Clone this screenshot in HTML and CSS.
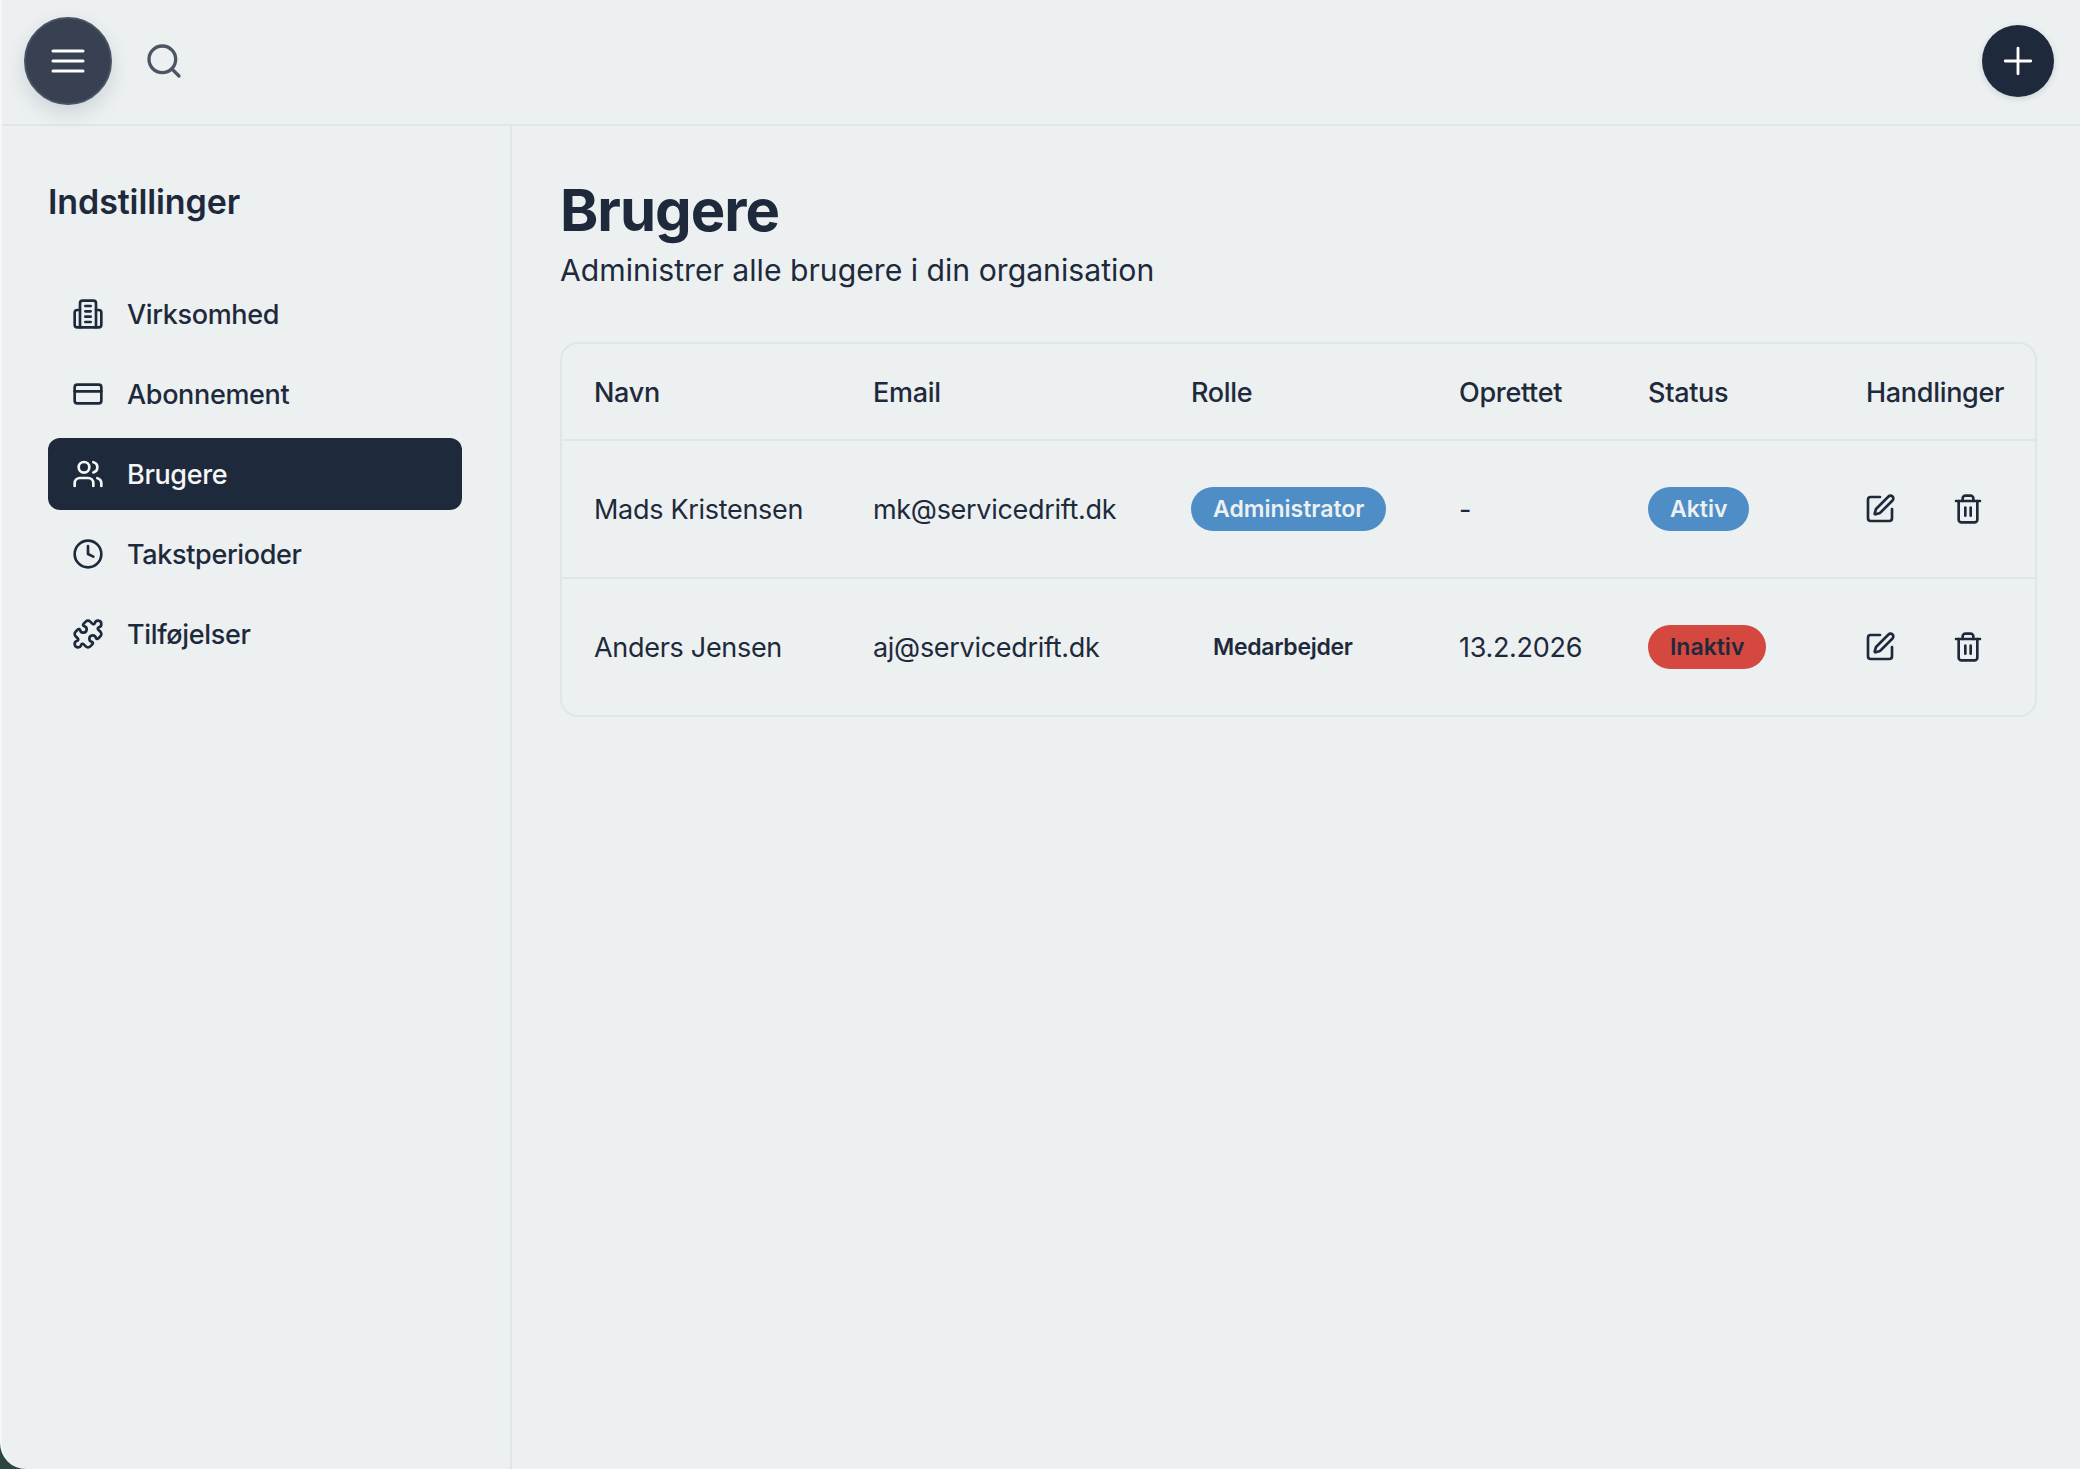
FILE: index.html
```html
<!DOCTYPE html>
<html lang="da">
<head>
<meta charset="utf-8">
<title>Brugere</title>
<link rel="stylesheet" href="styles.css">
</head>
<body>
<svg class="defs" aria-hidden="true">
  <symbol id="i-edit" viewBox="0 0 24 24"><path d="M12 3H5a2 2 0 0 0-2 2v14a2 2 0 0 0 2 2h14a2 2 0 0 0 2-2v-7"/><path d="M18.375 2.625a1 1 0 0 1 3 3l-9.013 9.014a2 2 0 0 1-.853.505l-2.873.84a.5.5 0 0 1-.62-.62l.84-2.873a2 2 0 0 1 .506-.852z"/></symbol>
  <symbol id="i-trash" viewBox="0 0 24 24"><path d="M3 6h18"/><path d="M19 6v14c0 1-1 2-2 2H7c-1 0-2-1-2-2V6"/><path d="M8 6V4c0-1 1-2 2-2h4c1 0 2 1 2 2v2"/><path d="M10 11v6"/><path d="M14 11v6"/></symbol>
</svg>
<div class="app">
  <header class="topbar">
    <div class="topbar-left">
      <button class="menu-btn" aria-label="Menu"><svg class="icon-menu" viewBox="0 0 24 24"><path d="M3 6h18M3 12h18M3 18h18"/></svg></button>
      <svg class="icon-search" viewBox="0 0 24 24"><circle cx="11" cy="11" r="8"/><path d="m21 21-4.3-4.3"/></svg>
    </div>
    <button class="add-btn" aria-label="Tilføj"><svg class="icon-plus" viewBox="0 0 24 24"><path d="M12 3v18M3 12h18"/></svg></button>
  </header>
  <div class="body">
    <aside class="sidebar">
      <h2 class="side-title">Indstillinger</h2>
      <nav class="nav">
        <a class="nav-item"><svg class="nav-icon" viewBox="0 0 24 24"><path d="M6 9H4a2 2 0 0 0-2 2v9a2 2 0 0 0 2 2h16a2 2 0 0 0 2-2v-9a2 2 0 0 0-2-2h-2"/><path d="M6 22V4a2 2 0 0 1 2-2h8a2 2 0 0 1 2 2v18"/><path d="M10 6h4M10 10h4M10 14h4M10 18h4"/></svg>Virksomhed</a>
        <a class="nav-item"><svg class="nav-icon" viewBox="0 0 24 24"><rect x="2" y="5" width="20" height="14" rx="2"/><path d="M2 10h20"/></svg>Abonnement</a>
        <a class="nav-item active"><svg class="nav-icon" viewBox="0 0 24 24"><path d="M16 21v-2a4 4 0 0 0-4-4H6a4 4 0 0 0-4 4v2"/><circle cx="9" cy="7" r="4"/><path d="M22 21v-2a4 4 0 0 0-3-3.87"/><path d="M16 3.13a4 4 0 0 1 0 7.75"/></svg>Brugere</a>
        <a class="nav-item"><svg class="nav-icon" viewBox="0 0 24 24"><circle cx="12" cy="12" r="10"/><path d="M12 6v6l4 2"/></svg>Takstperioder</a>
        <a class="nav-item"><svg class="nav-icon" viewBox="0 0 24 24"><path d="M15.39 4.39a1 1 0 0 0 1.68-.474 2.5 2.5 0 1 1 3.014 3.015 1 1 0 0 0-.474 1.68l1.683 1.682a2.414 2.414 0 0 1 0 3.414L19.61 15.39a1 1 0 0 1-1.68-.474 2.5 2.5 0 1 0-3.014 3.015 1 1 0 0 1 .474 1.68l-1.683 1.682a2.414 2.414 0 0 1-3.414 0L8.61 19.61a1 1 0 0 0-1.68.474 2.5 2.5 0 1 1-3.014-3.015 1 1 0 0 0 .474-1.68l-1.683-1.682a2.414 2.414 0 0 1 0-3.414L4.39 8.61a1 1 0 0 1 1.68.474 2.5 2.5 0 1 0 3.014-3.015 1 1 0 0 1-.474-1.68l1.683-1.682a2.414 2.414 0 0 1 3.414 0z"/></svg>Tilføjelser</a>
      </nav>
    </aside>
    <main class="content">
      <h1 class="page-title">Brugere</h1>
      <p class="page-sub">Administrer alle brugere i din organisation</p>
      <div class="table-wrap">
        <table class="users">
          <thead>
            <tr><th class="c-name">Navn</th><th class="c-mail">Email</th><th class="c-role">Rolle</th><th class="c-date">Oprettet</th><th class="c-status">Status</th><th class="c-act">Handlinger</th></tr>
          </thead>
          <tbody>
            <tr>
              <td>Mads Kristensen</td><td>mk@servicedrift.dk</td>
              <td><span class="badge blue">Administrator</span></td><td>-</td>
              <td><span class="badge blue">Aktiv</span></td>
              <td><div class="actions"><svg class="act-icon"><use href="#i-edit"/></svg><svg class="act-icon"><use href="#i-trash"/></svg></div></td>
            </tr>
            <tr>
              <td>Anders Jensen</td><td>aj@servicedrift.dk</td>
              <td><span class="badge plain">Medarbejder</span></td><td>13.2.2026</td>
              <td><span class="badge red">Inaktiv</span></td>
              <td><div class="actions"><svg class="act-icon"><use href="#i-edit"/></svg><svg class="act-icon"><use href="#i-trash"/></svg></div></td>
            </tr>
          </tbody>
        </table>
      </div>
    </main>
  </div>
</div>
</body>
</html>
```
FILE: styles.css
```css
* { box-sizing: border-box; }
html, body { margin: 0; height: 100%; }
body { background: #2c4643; font-family: "Inter", "Liberation Sans", sans-serif; color: #1e2a3b; overflow: hidden; }
.defs { display: none; }
svg { fill: none; stroke: currentColor; stroke-width: 2; stroke-linecap: round; stroke-linejoin: round; flex: none; }
.app { height: 1469px; background: #ecf0f1; border-left: 2px solid #f4f6f7; border-bottom-left-radius: 26px; overflow: hidden; display: flex; flex-direction: column; }
.topbar { height: 126px; flex: none; border-bottom: 2px solid #dfe5ea; display: flex; align-items: center; justify-content: space-between; padding: 0 26px 2px 22px; }
.topbar-left { display: flex; align-items: center; gap: 32px; }
.menu-btn { width: 88px; height: 88px; border-radius: 50%; background: #374151; border: 2px solid #475264; color: #fff; display: flex; align-items: center; justify-content: center; padding: 0; box-shadow: 0 8px 20px rgba(30, 42, 59, .14); }
.icon-menu { width: 40px; height: 40px; stroke-width: 1.8; }
.icon-search { width: 40px; height: 40px; color: #4b5563; }
.add-btn { width: 72px; height: 72px; border-radius: 50%; background: #1e2a3b; border: 0; color: #fff; display: flex; align-items: center; justify-content: center; padding: 0; box-shadow: 0 2px 6px rgba(30, 42, 59, .15); }
.icon-plus { width: 34px; height: 34px; }
.body { flex: 1; display: flex; min-height: 0; }
.sidebar { width: 510px; flex: none; border-right: 2px solid #dfe5ea; padding: 48px 48px 0 46px; }
.side-title { margin: 0 0 48px; font-size: 34px; line-height: 56px; font-weight: 600; letter-spacing: -.1px; }
.nav { display: flex; flex-direction: column; gap: 8px; }
.nav-item { height: 72px; border-radius: 12px; display: flex; align-items: center; gap: 23px; padding: 0 24px; font-size: 27px; font-weight: 500; letter-spacing: -.35px; }
.nav-item.active { background: #1e2a3b; color: #f4f6f7; }
.nav-icon { width: 32px; height: 32px; }
.content { flex: 1; padding: 49px 43px 0 48px; min-width: 0; }
.page-title { margin: 0; font-size: 58px; line-height: 70px; font-weight: 700; letter-spacing: -1px; }
.page-sub { margin: 3px 0 50px; font-size: 30.2px; line-height: 44px; }
.table-wrap { border: 2px solid #dfe5ea; border-radius: 18px; overflow: hidden; }
.users { width: 100%; border-collapse: collapse; table-layout: fixed; font-size: 27px; letter-spacing: -.3px; }
.users th { height: 96px; padding: 1px 0 0 32px; text-align: left; font-weight: 500; border-bottom: 2px solid #dfe5ea; }
.users td { height: 138px; padding: 0 0 0 32px; }
.users tbody tr + tr td { height: 137px; border-top: 2px solid #dfe5ea; }
.c-name { width: 279px; }
.c-mail { width: 318px; }
.c-role { width: 268px; }
.c-date { width: 189px; }
.c-status { width: 218px; }
.badge { display: inline-flex; align-items: center; height: 44px; padding: 0 22px; border-radius: 22px; font-size: 23px; font-weight: 600; vertical-align: middle; letter-spacing: 0; }
.badge.plain { letter-spacing: -.3px; }
.badge.blue { background: #4f8dc6; color: #ecf0f1; }
.badge.red { background: #d4483f; color: #1e2a3b; }
.actions { display: flex; gap: 56px; margin-left: -2px; }
.act-icon { width: 32px; height: 32px; }
```
